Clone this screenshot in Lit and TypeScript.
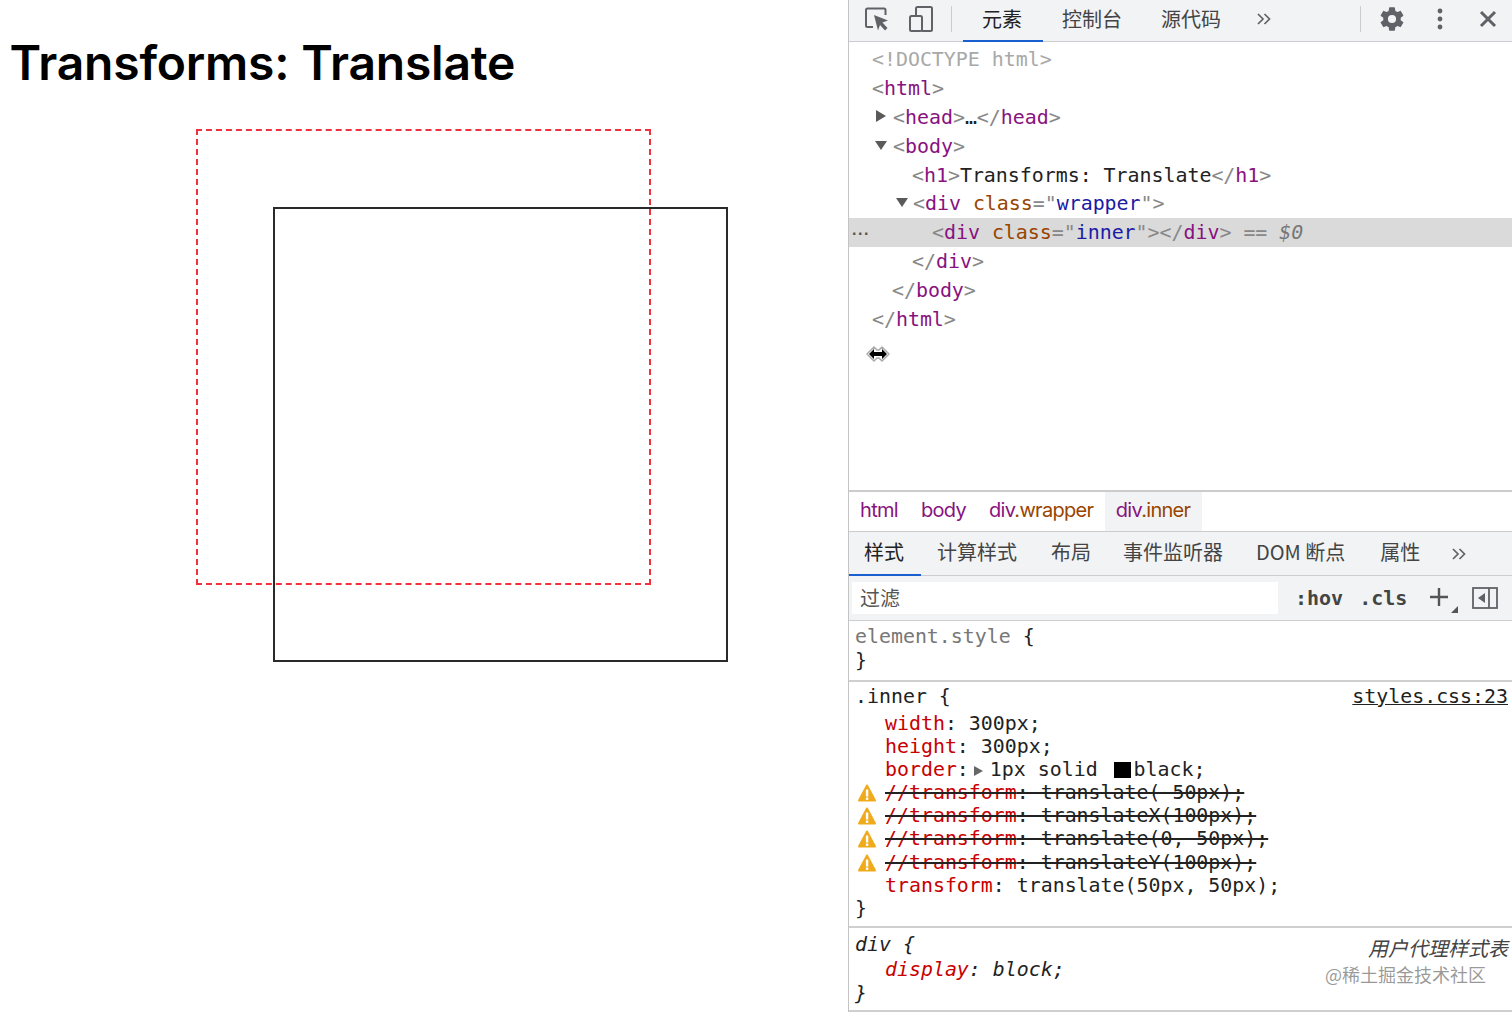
import { LitElement, html, css } from "lit";
import { customElement } from "lit/decorators.js";

const warn = html`<svg class="warn" viewBox="0 0 18 18"><path d="M9 1.500 L17 16.500 L1 16.500 Z" fill="#f0ab1c" stroke="#f0ab1c" stroke-width="2" stroke-linejoin="round"/><rect x="7.900" y="5.500" width="2.400" height="7" fill="#fff"/><rect x="7.900" y="13.500" width="2.400" height="2.400" fill="#fff"/></svg>`;
const chev = html`<svg class="chev" viewBox="0 0 16 14"><path d="M2 2l5 5-5 5M8.500 2l5 5-5 5" fill="none" stroke="#5f6368" stroke-width="1.700"/></svg>`;

@customElement("app-root")
export class AppRoot extends LitElement {
  static styles = css`
    :host { display: flex; width: 1512px; height: 1012px; overflow: hidden; background: #fff; position: relative; color: #222; }
    .page { width: 848px; flex: none; }
    h1 { margin: 0; padding: 34px 0 0 9.5px; font: 600 48px/58px Inter, "Liberation Sans", sans-serif; color: #000; letter-spacing: -0.2px; }
    .wrapper { width: 451px; height: 452px; margin: 37px 0 0 196px; border: 2px dashed #f0323f; }
    .inner { width: 451px; height: 451px; border: 2px solid #2a2a2a; transform: translate(75px, 76px); }
    .tools { flex: 1; min-width: 0; border-left: 1px solid #c4c4c4; display: flex; flex-direction: column; }
    .bar { height: 37px; padding-bottom: 4px; flex: none; background: #f1f3f4; border-bottom: 1px solid #cbcdd0; display: flex; align-items: center; font: 20px "Noto Sans CJK SC", sans-serif; color: #444; }
    .bar svg { flex: none; display: block; }
    .ico-a { margin-left: 15px; width: 26px; height: 26px; }
    .ico-b { margin-left: 18px; width: 26px; height: 28px; }
    .sep { width: 1px; height: 26px; background: #ccc; flex: none; }
    .sep.s1 { margin-left: 17px; }
    .sep.s2 { margin-left: auto; }
    .tab { align-self: flex-start; height: 42px; box-sizing: border-box; line-height: 37px; flex: none; }
    .t1 { margin-left: 11px; padding: 0 21px 0 19px; border-bottom: 2.5px solid #1a5fd0; color: #222; }
    .t2 { margin-left: 19px; }
    .t3 { margin-left: 39px; }
    .chev { width: 16px; height: 14px; }
    .bar .chev.c1 { margin-left: 35px; }
    .gear { width: 28px; height: 28px; margin-left: 17px; }
    .kebab { width: 6px; height: 22px; margin-left: 31px; }
    .close { width: 18px; height: 18px; margin: 0 15px 0 36px; }

    .tree { flex: 1; padding-top: 3px; font: 19.95px/28.9px "DejaVu Sans Mono", monospace; letter-spacing: -0.03px; overflow: hidden; position: relative; }
    .row { height: 28.9px; white-space: pre; }
    .row.sel { background: #dadada; position: relative; }
    .dots { position: absolute; left: 3px; top: 4px; font: 700 16px/16px "Liberation Sans", sans-serif; letter-spacing: 1.6px; color: #555; }
    .l0 { padding-left: 23px; }
    .l1 { padding-left: 43px; }
    .l2 { padding-left: 63px; }
    .l3 { padding-left: 83px; }
    .a1 { padding-left: 26px; }
    .a2 { padding-left: 47px; }
    .tri { width: 12px; height: 12px; margin-right: 6px; vertical-align: 2px; }
    .a2 .tri { margin-right: 5px; }
    .g { color: #a8a8a8; }
    .p { color: #888; }
    .t { color: #881280; }
    .n { color: #994500; }
    .v { color: #1a1aa6; }
    .i { font-style: italic; color: #777; }
    .cursor { position: absolute; left: 15px; top: 300px; width: 28px; height: 24px; }

    .crumbs { height: 42px; box-sizing: border-box; flex: none; border-top: 2px solid #ccc; border-bottom: 1px solid #ccc; display: flex; font: 20px/36px Inter, "Liberation Sans", sans-serif; letter-spacing: -0.7px; color: #881280; }
    .crumb { padding: 0 12px 0 11px; }
    .crumb:first-child { padding-left: 11px; }
    .crumb.on { background: #f1f3f4; margin-left: -0.5px; }
    .crumbs .n { color: #994500; }
    .tabs { height: 44px; box-sizing: border-box; flex: none; background: #f1f3f4; border-bottom: 1px solid #cbcdd0; display: flex; align-items: stretch; font: 20px/40px "Noto Sans CJK SC", sans-serif; color: #444; position: relative; z-index: 1; }
    .tabs .tb { flex: none; }
    .tb.on { width: 72px; box-sizing: border-box; padding-left: 15px; border-bottom: 2.5px solid #1a5fd0; color: #222; margin-bottom: -1px; }
    .m16 { margin-left: 16px; }
    .m34 { margin-left: 34px; }
    .m33 { margin-left: 33px; }
    .m32 { margin-left: 32px; }
    .m35 { margin-left: 35px; }
    .tabs .chev { align-self: center; margin-left: 31px; }
    .filter { height: 45px; box-sizing: border-box; flex: none; background: #f1f3f4; border-bottom: 1px solid #cbcdd0; display: flex; align-items: center; }
    .input { width: 426px; height: 32px; margin-left: 3px; background: #fff; font: 20px/32px "Noto Sans CJK SC", sans-serif; color: #555; padding-left: 8px; box-sizing: border-box; flex: none; }
    .btn { font: 700 20px "DejaVu Sans Mono", monospace; color: #444; flex: none; }
    .hov { margin-left: 17px; }
    .cls { margin-left: 16px; }
    .plus { width: 30px; height: 30px; margin-left: 23px; flex: none; }
    .side { width: 26px; height: 22px; margin-left: 12px; flex: none; }

    .styles { flex: none; font: 19.9px/23.2px "DejaVu Sans Mono", monospace; position: relative; }
    .sec { border-bottom: 2px solid #cfcfcf; padding-left: 6px; box-sizing: border-box; }
    .sec1 { height: 61px; padding-top: 4px; }
    .sec1 .ln { height: 24px; line-height: 24px; }
    .sec2 { height: 246px; padding-top: 3px; position: relative; }
    .sec2 .sel { height: 24px; line-height: 24px; margin-bottom: 2.5px; display: flex; justify-content: space-between; padding-right: 4px; white-space: pre; }
    .sec3 { height: 84px; padding-top: 5px; }
    .sec3 .ln { height: 24.5px; line-height: 24.5px; display: flex; justify-content: space-between; padding-right: 4px; font-style: italic; }
    .gray { color: #777; }
    .link { text-decoration: underline; }
    .ln { height: 23.2px; position: relative; white-space: pre; }
    .decl { padding-left: 30px; }
    .r { color: #c80000; }
    .strike { text-decoration: line-through; text-decoration-color: #222; text-decoration-thickness: 1.5px; }
    .warn { position: absolute; left: 3px; top: 3px; width: 18px; height: 18px; }
    .mini { width: 12px; height: 12px; margin: 0 5px 0 4px; vertical-align: -1px; }
    .swatch { display: inline-block; width: 17px; height: 16px; background: #000; margin: 0 3px 0 4px; vertical-align: -2px; }
    .ua { font: italic 20px "Noto Sans CJK SC", sans-serif; color: #444; }
    .wm { position: absolute; right: 26px; top: 341px; font: 18px/24px "Noto Sans CJK SC", sans-serif; color: rgba(120, 120, 120, 0.75); }
  `;

  private triDown() {
    return html`<svg class="tri" viewBox="0 0 12 12"><path d="M0 2h12L6 11z" fill="#5a5a5a"/></svg>`;
  }

  render() {
    return html`
      <section class="page">
        <h1>Transforms: Translate</h1>
        <div class="wrapper"><div class="inner"></div></div>
      </section>
      <section class="tools">
        <header class="bar">
          <svg class="ico-a" viewBox="0 0 26 26"><path d="M9 21H3.500a1.500 1.500 0 0 1-1.500-1.500V4a1.500 1.500 0 0 1 1.500-1.500H20a1.500 1.500 0 0 1 1.500 1.500v5" fill="none" stroke="#5f6368" stroke-width="2"/><path d="M10 9l14 5.500-5.500 2 5 5.500-2.500 2.500-5-5.500-2 5.500z" fill="#5f6368"/></svg>
          <svg class="ico-b" viewBox="0 0 26 28"><path d="M8 10V3.500A1.500 1.500 0 0 1 9.500 2h13A1.500 1.500 0 0 1 24 3.500v21a1.500 1.500 0 0 1-1.500 1.500H14" fill="none" stroke="#5f6368" stroke-width="2"/><rect x="2" y="11" width="12" height="15" rx="1.500" fill="none" stroke="#5f6368" stroke-width="2"/></svg>
          <span class="sep s1"></span>
          <span class="tab t1">元素</span>
          <span class="tab t2">控制台</span>
          <span class="tab t3">源代码</span>
          <svg class="chev c1" viewBox="0 0 16 14"><path d="M2 2l5 5-5 5M8.500 2l5 5-5 5" fill="none" stroke="#5f6368" stroke-width="1.700"/></svg>
          <span class="sep s2"></span>
          <svg class="gear" viewBox="0 0 24 24"><path fill="#5f6368" d="M19.430 12.980c.04-.32.07-.64.07-.98s-.03-.66-.07-.98l2.110-1.650c.19-.15.240-.42.120-.64l-2-3.460c-.12-.22-.39-.30-.61-.22l-2.490 1c-.52-.40-1.080-.73-1.690-.98l-.38-2.650A.488.488 0 0 0 14 2h-4c-.25 0-.46.18-.49.420l-.38 2.650c-.61.25-1.170.59-1.690.98l-2.490-1c-.23-.09-.49 0-.61.220l-2 3.460c-.13.220-.07.490.12.640l2.110 1.650c-.04.32-.07.650-.07.980s.03.660.07.980l-2.110 1.650c-.19.150-.24.420-.12.640l2 3.460c.12.220.39.300.61.220l2.490-1c.52.400 1.080.730 1.690.980l.38 2.650c.03.240.24.420.49.420h4c.25 0 .46-.18.49-.42l.38-2.650c.61-.25 1.170-.59 1.690-.98l2.490 1c.23.090.49 0 .61-.22l2-3.460c.12-.22.07-.49-.12-.64l-2.110-1.650zM12 15.500a3.500 3.500 0 1 1 0-7 3.500 3.500 0 0 1 0 7z"/></svg>
          <svg class="kebab" viewBox="0 0 6 22"><circle cx="3" cy="3" r="2.400" fill="#5f6368"/><circle cx="3" cy="11" r="2.400" fill="#5f6368"/><circle cx="3" cy="19" r="2.400" fill="#5f6368"/></svg>
          <svg class="close" viewBox="0 0 18 18"><path d="M2 2l14 14M16 2L2 16" stroke="#5f6368" stroke-width="3"/></svg>
        </header>

        <div class="tree">
          <div class="row l0"><span class="g">&lt;!DOCTYPE html&gt;</span></div>
          <div class="row l0"><span class="p">&lt;</span><span class="t">html</span><span class="p">&gt;</span></div>
          <div class="row a1"><svg class="tri" viewBox="0 0 12 12"><path d="M1 0v12l10-6z" fill="#5a5a5a"/></svg><span class="p">&lt;</span><span class="t">head</span><span class="p">&gt;</span>…<span class="p">&lt;/</span><span class="t">head</span><span class="p">&gt;</span></div>
          <div class="row a1">${this.triDown()}<span class="p">&lt;</span><span class="t">body</span><span class="p">&gt;</span></div>
          <div class="row l2"><span class="p">&lt;</span><span class="t">h1</span><span class="p">&gt;</span>Transforms: Translate<span class="p">&lt;/</span><span class="t">h1</span><span class="p">&gt;</span></div>
          <div class="row a2">${this.triDown()}<span class="p">&lt;</span><span class="t">div</span> <span class="n">class</span><span class="p">="</span><span class="v">wrapper</span><span class="p">"&gt;</span></div>
          <div class="row sel l3"><span class="dots">...</span><span class="p">&lt;</span><span class="t">div</span> <span class="n">class</span><span class="p">="</span><span class="v">inner</span><span class="p">"&gt;&lt;/</span><span class="t">div</span><span class="p">&gt;</span> <span class="p">==</span> <span class="i">$0</span></div>
          <div class="row l2"><span class="p">&lt;/</span><span class="t">div</span><span class="p">&gt;</span></div>
          <div class="row l1"><span class="p">&lt;/</span><span class="t">body</span><span class="p">&gt;</span></div>
          <div class="row l0"><span class="p">&lt;/</span><span class="t">html</span><span class="p">&gt;</span></div>
          <svg class="cursor" viewBox="0 0 28 24"><path d="M3 12l7-7 3 3h2l3-3 7 7-7 7-3-3h-2l-3 3z" fill="#fff" stroke="#aaa" stroke-width="1.500" stroke-linejoin="round"/><path d="M5 12l5-5v3h8V7l5 5-5 5v-3h-8v3z" fill="#000"/></svg>
        </div>

        <nav class="crumbs">
          <span class="crumb">html</span>
          <span class="crumb">body</span>
          <span class="crumb">div<span class="n">.wrapper</span></span>
          <span class="crumb on">div<span class="n">.inner</span></span>
        </nav>

        <div class="tabs">
          <span class="tb on">样式</span>
          <span class="tb m16">计算样式</span>
          <span class="tb m34">布局</span>
          <span class="tb m32">事件监听器</span>
          <span class="tb m33">DOM 断点</span>
          <span class="tb m35">属性</span>
          ${chev}
        </div>

        <div class="filter">
          <div class="input">过滤</div>
          <span class="btn hov">:hov</span>
          <span class="btn cls">.cls</span>
          <svg class="plus" viewBox="0 0 30 30"><path d="M9 5v18M0 14h18" stroke="#555" stroke-width="2.400"/><path d="M28 23v8h-8z" fill="#555"/></svg>
          <svg class="side" viewBox="0 0 26 22"><rect x="1" y="1" width="24" height="20" fill="none" stroke="#5f6368" stroke-width="1.800"/><path d="M17 1v20" stroke="#5f6368" stroke-width="1.800"/><path d="M13 6v10l-7-5z" fill="#5f6368"/></svg>
        </div>

        <div class="styles">
          <div class="sec sec1">
            <div class="ln"><span class="gray">element.style</span> {</div>
            <div class="ln">}</div>
          </div>
          <div class="sec sec2">
            <div class="sel"><span>.inner {</span><span class="link">styles.css:23</span></div>
            <div class="ln decl"><span class="r">width</span>: 300px;</div>
            <div class="ln decl"><span class="r">height</span>: 300px;</div>
            <div class="ln decl"><span class="r">border</span>:<svg class="mini" viewBox="0 0 12 12"><path d="M1 1v10l9-5z" fill="#666"/></svg>1px solid <span class="swatch"></span>black;</div>
            <div class="ln decl">${warn}<span class="strike"><span class="r">//transform</span>: translate(-50px);</span></div>
            <div class="ln decl">${warn}<span class="strike"><span class="r">//transform</span>: translateX(100px);</span></div>
            <div class="ln decl">${warn}<span class="strike"><span class="r">//transform</span>: translate(0, 50px);</span></div>
            <div class="ln decl">${warn}<span class="strike"><span class="r">//transform</span>: translateY(100px);</span></div>
            <div class="ln decl"><span class="r">transform</span>: translate(50px, 50px);</div>
            <div class="ln">}</div>
          </div>
          <div class="sec sec3">
            <div class="ln"><span>div {</span><span class="ua">用户代理样式表</span></div>
            <div class="ln decl"><span><span class="r">display</span>: block;</span></div>
            <div class="ln">}</div>
          </div>
          <div class="wm">@稀土掘金技术社区</div>
        </div>
      </section>
    `;
  }
}
